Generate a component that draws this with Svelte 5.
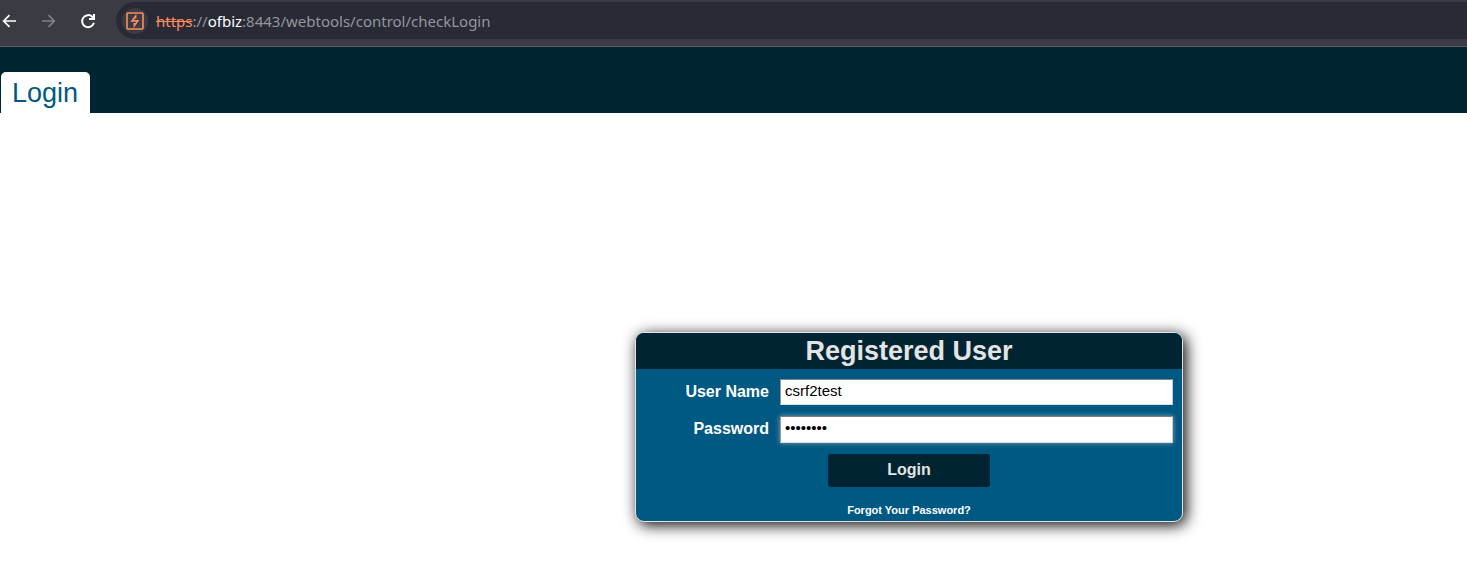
<script>
  let username = $state('csrf2test');
  let password = $state('password');
</script>

<header class="toolbar">
  <button class="nav back" type="button" aria-label="Back">
    <svg width="16" height="16" viewBox="0 0 16 16"><path d="M16 8H4M9.5 2.2L3.7 8l5.8 5.8" /></svg>
  </button>
  <button class="nav forward" type="button" aria-label="Forward" disabled>
    <svg width="16" height="16" viewBox="0 0 16 16"><path d="M2 8h12M8.5 2.2L14.3 8l-5.8 5.8" /></svg>
  </button>
  <button class="nav reload" type="button" aria-label="Reload">
    <svg width="16" height="16" viewBox="0 0 16 16">
      <path d="M13.9 9.8A6 6 0 1 1 12.3 3.8L14 5.5M14 1V6H9" />
    </svg>
  </button>
  <div class="address">
    <span class="badge">
      <svg width="18" height="18" viewBox="0 0 18 18">
        <rect x="1" y="1" width="16" height="16" rx="1" />
        <path class="bolt" d="M9.6 6.6V4.2L6 8.9H11.8L8.4 13.8V11" />
      </svg>
    </span>
    <span class="url"><s>https</s>://<b>ofbiz</b>:8443/webtools/control/checkLogin</span>
  </div>
</header>

<nav class="masthead">
  <a class="tab" href="#login">Login</a>
</nav>

<main>
  <section class="card">
    <h1>Registered User</h1>
    <form id="login" onsubmit={(e) => e.preventDefault()}>
      <div class="fields">
        <label for="username">User Name</label>
        <input id="username" type="text" autocomplete="off" bind:value={username} />
        <label for="password">Password</label>
        <input id="password" class="active" type="password" autocomplete="off" bind:value={password} />
      </div>
      <button class="submit" type="submit">Login</button>
      <a class="forgot" href="#forgot">Forgot Your Password?</a>
    </form>
  </section>
</main>

<style>
  :global(body) {
    background: #fff;
    font-family: 'Liberation Sans', Arial, sans-serif;
  }

  .toolbar {
    display: flex;
    align-items: center;
    padding: 2px 0 7px;
    background: #3b3c43;
    border-bottom: 1px solid #5e5f64;
  }

  .nav {
    display: flex;
    flex: none;
    width: 16px;
    margin-right: 24px;
    padding: 0;
    border: 0;
    background: none;
    color: #fff;
  }

  .nav svg {
    fill: none;
    stroke: currentColor;
    stroke-width: 1.7;
  }

  .forward {
    color: #808187;
  }

  .reload {
    margin-right: 20px;
  }

  .reload svg {
    stroke-width: 2;
  }

  .address {
    display: flex;
    flex: 1;
    align-items: center;
    height: 37px;
    gap: 8px;
    padding-left: 6px;
    box-sizing: border-box;
    border-radius: 19px 0 0 19px;
    background: #282a36;
    overflow: hidden;
  }

  .badge {
    display: flex;
    flex: none;
    align-items: center;
    justify-content: center;
    width: 26px;
    height: 26px;
    border-radius: 50%;
    background: #3b3c43;
  }

  .badge svg {
    fill: none;
    stroke: #ff8c5c;
    stroke-width: 1.6;
  }

  .url {
    color: #95969c;
    font: 15px/20px 'Noto Sans', sans-serif;
    white-space: nowrap;
  }

  .url s {
    color: #ff8c5c;
  }

  .url b {
    color: #fff;
    font-weight: 400;
  }

  .masthead {
    display: flex;
    padding: 25px 1px 0;
    background: #002432;
  }

  .tab {
    padding: 1px 12px 0 11px;
    border-radius: 5px 5px 0 0;
    background: #fff;
    color: #005983;
    font-size: 27px;
    line-height: 40px;
    text-decoration: none;
  }

  main {
    display: flex;
    justify-content: center;
    padding: 219px 0 60px 351px;
  }

  .card {
    width: 546px;
    border: 1px solid #e4e4e4;
    border-radius: 9px;
    background: #005983;
    box-shadow: 3px 3px 15px #000;
    overflow: hidden;
  }

  h1 {
    margin: 0;
    background: #002432;
    color: #e4e4e4;
    font-size: 27px;
    line-height: 36px;
    text-align: center;
  }

  form {
    display: flex;
    flex-direction: column;
    align-items: center;
    padding: 10px 9px 4px;
  }

  .fields {
    display: grid;
    grid-template-columns: 1fr 393px;
    gap: 11px;
    align-items: start;
    align-self: stretch;
  }

  label {
    color: #fff;
    font-size: 16px;
    font-weight: 700;
    line-height: 26px;
    text-align: right;
  }

  input {
    width: 100%;
    height: 26px;
    padding: 0 4px 3px;
    box-sizing: border-box;
    border: 1px solid;
    border-color: #808080 #c8c8c8 #dcdcdc #999;
    border-radius: 0;
    outline: none;
    background: #fff;
    color: #000;
    font: 15px 'Liberation Sans', Arial, sans-serif;
  }

  .active {
    height: 27px;
    padding-bottom: 4px;
    box-shadow: 0 0 5px #7f9fae;
  }

  .submit {
    width: 162px;
    height: 33px;
    margin-top: 11px;
    padding: 0 0 2px;
    border: 0;
    border-radius: 3px;
    background: #002432;
    color: #e4e4e4;
    font: 700 16px 'Liberation Sans', Arial, sans-serif;
  }

  .forgot {
    margin-top: 16px;
    color: #fff;
    font-size: 11px;
    font-weight: 700;
    line-height: 14px;
    text-decoration: none;
  }
</style>
